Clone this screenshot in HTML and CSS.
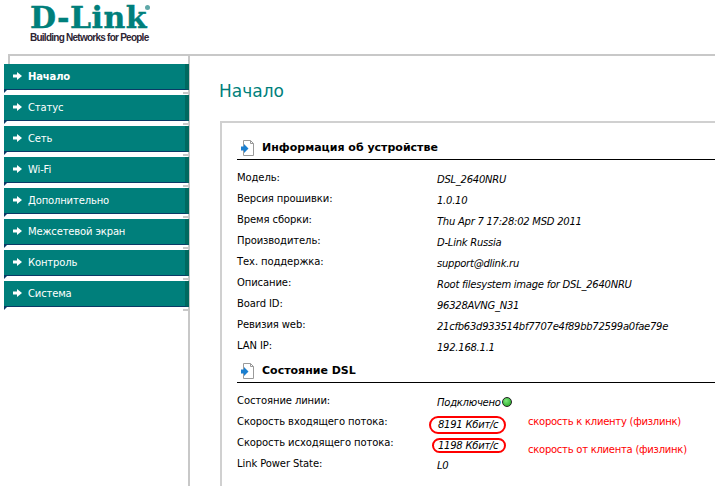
FILE: index.html
```html
<!DOCTYPE html>
<html lang="ru">
<head>
<meta charset="utf-8">
<title>D-Link</title>
<link rel="stylesheet" href="styles.css">
</head>
<body>
<header class="header">
  <div class="logo">
    <div class="logo-name">D-Link<span class="logo-reg"></span></div>
    <div class="logo-tag">Building Networks for People</div>
  </div>
</header>
<div class="page">
  <nav class="menu">
    <a class="item active"><svg class="arrow" viewBox="0 0 9 8"><path d="M0 2.500h4V0l5 4-5 4V5.500H0z"/></svg>Начало</a>
    <a class="item"><svg class="arrow" viewBox="0 0 9 8"><path d="M0 2.500h4V0l5 4-5 4V5.500H0z"/></svg>Статус</a>
    <a class="item"><svg class="arrow" viewBox="0 0 9 8"><path d="M0 2.500h4V0l5 4-5 4V5.500H0z"/></svg>Сеть</a>
    <a class="item"><svg class="arrow" viewBox="0 0 9 8"><path d="M0 2.500h4V0l5 4-5 4V5.500H0z"/></svg>Wi-Fi</a>
    <a class="item"><svg class="arrow" viewBox="0 0 9 8"><path d="M0 2.500h4V0l5 4-5 4V5.500H0z"/></svg>Дополнительно</a>
    <a class="item"><svg class="arrow" viewBox="0 0 9 8"><path d="M0 2.500h4V0l5 4-5 4V5.500H0z"/></svg>Межсетевой экран</a>
    <a class="item"><svg class="arrow" viewBox="0 0 9 8"><path d="M0 2.500h4V0l5 4-5 4V5.500H0z"/></svg>Контроль</a>
    <a class="item"><svg class="arrow" viewBox="0 0 9 8"><path d="M0 2.500h4V0l5 4-5 4V5.500H0z"/></svg>Система</a>
  </nav>
  <main class="content">
    <h1 class="title">Начало</h1>
    <section class="box">
      <h2 class="section-head"><svg class="doc" viewBox="0 0 14 16"><path d="M2.500.5h7l3 3v12h-10z" fill="#fff" stroke="#9a9a9a"/><path d="M9.500.5v3h3" fill="none" stroke="#9a9a9a"/><path d="M0 6.500h3V4l4.500 4.500L3 13v-2.500H0z" fill="#1a7fd0"/></svg>Информация об устройстве</h2>
      <dl class="rows">
        <dt>Модель:</dt><dd>DSL_2640NRU</dd>
        <dt>Версия прошивки:</dt><dd>1.0.10</dd>
        <dt>Время сборки:</dt><dd>Thu Apr 7 17:28:02 MSD 2011</dd>
        <dt>Производитель:</dt><dd>D-Link Russia</dd>
        <dt>Тех. поддержка:</dt><dd>support@dlink.ru</dd>
        <dt>Описание:</dt><dd>Root filesystem image for DSL_2640NRU</dd>
        <dt>Board ID:</dt><dd>96328AVNG_N31</dd>
        <dt>Ревизия web:</dt><dd>21cfb63d933514bf7707e4f89bb72599a0fae79e</dd>
        <dt>LAN IP:</dt><dd>192.168.1.1</dd>
      </dl>
      <h2 class="section-head"><svg class="doc" viewBox="0 0 14 16"><path d="M2.500.5h7l3 3v12h-10z" fill="#fff" stroke="#9a9a9a"/><path d="M9.500.5v3h3" fill="none" stroke="#9a9a9a"/><path d="M0 6.500h3V4l4.500 4.500L3 13v-2.500H0z" fill="#1a7fd0"/></svg>Состояние DSL</h2>
      <dl class="rows">
        <dt>Состояние линии:</dt><dd>Подключено<span class="led"></span></dd>
        <dt>Скорость входящего потока:</dt><dd><span class="ring">8191 Кбит/с</span><span class="note">скорость к клиенту (физлинк)</span></dd>
        <dt>Скорость исходящего потока:</dt><dd><span class="ring ring-b">1198 Кбит/с</span><span class="note note-b">скорость от клиента (физлинк)</span></dd>
        <dt>Link Power State:</dt><dd>L0</dd>
      </dl>
    </section>
  </main>
</div>
</body>
</html>
```
FILE: styles.css
```css
* { box-sizing: border-box; }
html, body { margin: 0; height: 486px; overflow: hidden; background: #fff; }
body { font-family: "DejaVu Sans", sans-serif; font-size: 10px; color: #000; }

.header { height: 54px; padding: 4px 0 0 30px; }
.logo { width: 125px; }
.logo-name { position: relative; height: 27px; font-family: "DejaVu Serif", serif; font-weight: 700; font-size: 30px; line-height: 27px; color: #007f7b; letter-spacing: .5px; -webkit-text-stroke: .4px #007f7b; white-space: nowrap; }
.logo-reg { position: absolute; left: 115px; top: 1px; width: 5px; height: 5px; border-radius: 50%; background: #5fa8a8; }
.logo-tag { font-family: "Liberation Sans", sans-serif; font-weight: 700; font-size: 10px; line-height: 11px; color: #2d2433; letter-spacing: -.75px; white-space: nowrap; margin-top: 1px; }

.page { display: flex; height: 432px; border-top: 2px solid #c8c8c8; margin-left: 8px; }
.menu { width: 186px; margin-left: -4px; padding-top: 8px; display: flex; flex-direction: column; gap: 5px; position: relative; border-right: 2px solid #c8c8c8; flex: none; }
.menu::before { content: ""; position: absolute; left: 4px; top: 0; height: 8px; border-left: 2px solid #c8c8c8; }
.item { display: flex; align-items: center; width: 185px; height: 26px; flex: none; padding: 0 0 1px 9px; background: #007f7b; border-bottom: 1px solid #0a3a66; border-right: 4px solid #00695f; color: #fff; font-size: 10px; letter-spacing: -.15px; position: relative; }
.item::after { content: ""; position: absolute; left: 0; bottom: -4px; border-top: 3px solid #0a3a66; border-right: 3px solid transparent; }
.item::before { content: ""; position: absolute; right: -4px; bottom: -5px; width: 6px; height: 2px; background: #c8c8c8; }
.item.active { font-weight: 700; }
.arrow { width: 9px; height: 8px; margin-right: 6px; fill: #fff; flex: none; }

.content { flex: 1; min-width: 0; padding: 24px 0 0 29px; }
.title { margin: 0 0 19px; font-size: 17px; font-weight: 400; line-height: 22px; color: #007f7b; }
.box { margin-left: 1px; border: 2px solid #d0d0d0; border-width: 2px 0 0 2px; padding: 13px 0 0 15px; height: 365px; }
.section-head { display: flex; align-items: center; height: 24px; margin: 0; border-bottom: 1px solid #000; font-size: 11px; font-weight: 700; color: #000; }
.doc { width: 14px; height: 16px; margin: 0 7px 0 4px; flex: none; }
.rows { display: grid; grid-template-columns: 200px 1fr; grid-auto-rows: 21px; margin: 7px 0 3px; align-items: center; letter-spacing: -.1px; }
dt { margin: 0; }
dd { margin: 0; padding-top: 4px; font-style: italic; position: relative; white-space: nowrap; letter-spacing: -.25px; }
.led { display: inline-block; width: 10px; height: 10px; border-radius: 50%; margin-left: 1px; vertical-align: -1px; background: radial-gradient(circle at 40% 35%, #7fe87f, #18a018); border: 1px solid #222; }
.ring { display: inline-block; margin: 2px 0 0 -8px; padding: 1.500px 6px 1.500px 7px; border: 2px solid #f00; border-radius: 10px; }
.ring-b { margin-left: -5px; padding: 0 6px 0 4px; }
.note { position: absolute; left: 91px; top: 6px; font-style: normal; color: #f00; }
.note-b { top: 12px; }
```
